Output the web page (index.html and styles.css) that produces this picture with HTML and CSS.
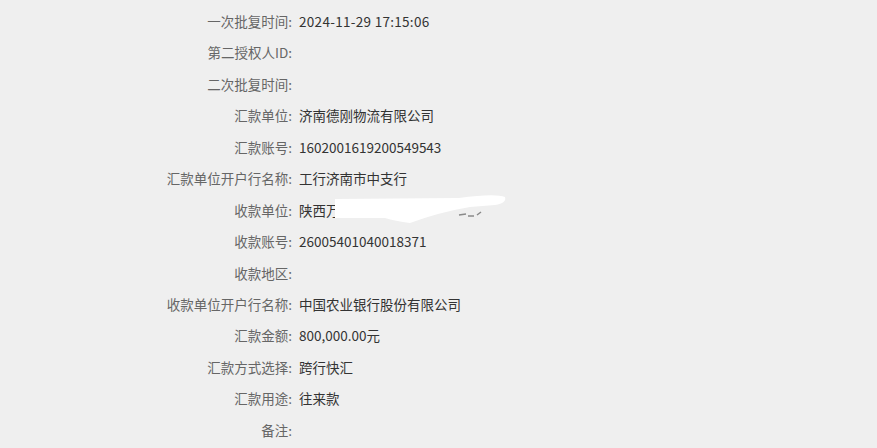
FILE: index.html
```html
<!DOCTYPE html>
<html lang="zh-CN">
<head>
<meta charset="utf-8">
<title>汇款详情</title>
<link rel="stylesheet" href="styles.css">
</head>
<body>
<div class="detail">
  <div class="label">一次批复时间:</div><div class="value num">2024-11-29 17:15:06</div>
  <div class="label">第二授权人ID:</div><div class="value"></div>
  <div class="label">二次批复时间:</div><div class="value"></div>
  <div class="label">汇款单位:</div><div class="value">济南德刚物流有限公司</div>
  <div class="label">汇款账号:</div><div class="value">1602001619200549543</div>
  <div class="label">汇款单位开户行名称:</div><div class="value">工行济南市中支行</div>
  <div class="label">收款单位:</div>
  <div class="value redacted">陕西万
    <svg class="mask" width="190" height="40" viewBox="0 0 190 40">
      <path d="M160,25 l7,-1 M169,26 l6,0 M178,25 l4,-3" stroke="#8a8a8a" stroke-width="1.5" fill="none"/>
      <path d="M36,9 L160,8 Q196,3 206,7 Q208,13 196,15 L171,17 Q141,22 111,33 Q96,31 86,28 L36,28 Z" fill="#ffffff"/>
    </svg>
  </div>
  <div class="label">收款账号:</div><div class="value">26005401040018371</div>
  <div class="label">收款地区:</div><div class="value"></div>
  <div class="label">收款单位开户行名称:</div><div class="value">中国农业银行股份有限公司</div>
  <div class="label">汇款金额:</div><div class="value">800,000.00元</div>
  <div class="label">汇款方式选择:</div><div class="value">跨行快汇</div>
  <div class="label">汇款用途:</div><div class="value">往来款</div>
  <div class="label">备注:</div><div class="value"></div>
</div>
</body>
</html>
```

FILE: styles.css
```css
html, body {
  margin: 0;
  padding: 0;
  background: #efefef;
}
body {
  font-family: "Noto Sans CJK SC", "Noto Sans", sans-serif;
  font-size: 13.5px;
  overflow: hidden;
}
.detail {
  display: grid;
  grid-template-columns: 292px 1fr;
  grid-auto-rows: 31.45px;
  column-gap: 7px;
  align-items: center;
  padding-top: 5.3px;
}
.label {
  text-align: right;
  color: #666666;
  white-space: nowrap;
}
.value {
  color: #333333;
  white-space: nowrap;
}
.num {
  letter-spacing: 0.3px;
}
.redacted {
  position: relative;
}
.mask {
  position: absolute;
  left: 0;
  top: -10px;
  overflow: visible;
}
```
